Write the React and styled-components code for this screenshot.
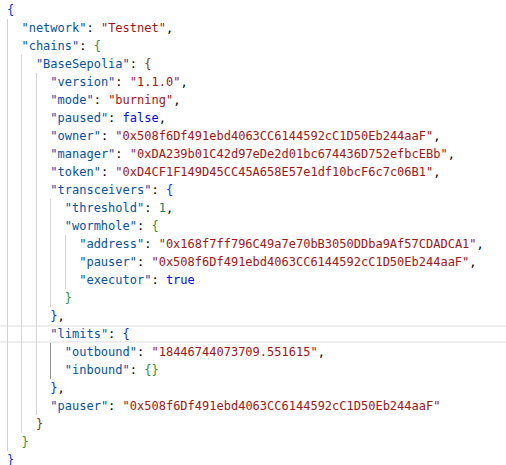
import React from 'react';
import styled, { createGlobalStyle } from 'styled-components';

const GlobalStyle = createGlobalStyle`
  html, body {
    margin: 0;
    padding: 0;
    background: #ffffff;
  }
`;

const colors = {
  key: '#0451a5',
  str: '#a31515',
  num: '#098658',
  bool: '#0000ff',
  punct: '#000000',
  b1: '#0431fa',
  b2: '#319331',
  b3: '#7b3814',
};

// [indent level, tokens, flags]
const k = (t) => ['key', `"${t}"`];
const s = (t) => ['str', `"${t}"`];
const p = (t) => ['punct', t];

const lines = [
  [0, [['b1', '{']]],
  [1, [k('network'), p(': '), s('Testnet'), p(',')]],
  [1, [k('chains'), p(': '), ['b2', '{']]],
  [2, [k('BaseSepolia'), p(': '), ['b3', '{']]],
  [3, [k('version'), p(': '), s('1.1.0'), p(',')]],
  [3, [k('mode'), p(': '), s('burning'), p(',')]],
  [3, [k('paused'), p(': '), ['bool', 'false'], p(',')]],
  [3, [k('owner'), p(': '), s('0x508f6Df491ebd4063CC6144592cC1D50Eb244aaF'), p(',')]],
  [3, [k('manager'), p(': '), s('0xDA239b01C42d97eDe2d01bc674436D752efbcEBb'), p(',')]],
  [3, [k('token'), p(': '), s('0xD4CF1F149D45CC45A658E57e1df10bcF6c7c06B1'), p(',')]],
  [3, [k('transceivers'), p(': '), ['b1', '{']]],
  [4, [k('threshold'), p(': '), ['num', '1'], p(',')]],
  [4, [k('wormhole'), p(': '), ['b2', '{']]],
  [5, [k('address'), p(': '), s('0x168f7ff796C49a7e70bB3050DDba9Af57CDADCA1'), p(',')]],
  [5, [k('pauser'), p(': '), s('0x508f6Df491ebd4063CC6144592cC1D50Eb244aaF'), p(',')]],
  [5, [k('executor'), p(': '), ['bool', 'true']]],
  [4, [['b2', '}']]],
  [3, [['b1', '}'], p(',')]],
  [3, [k('limits'), p(': '), ['b1', '{']], { current: true }],
  [4, [k('outbound'), p(': '), s('18446744073709.551615'), p(',')], { active: 3 }],
  [4, [k('inbound'), p(': '), ['b2', '{}']], { active: 3 }],
  [3, [['b1', '}'], p(',')]],
  [3, [k('pauser'), p(': '), s('0x508f6Df491ebd4063CC6144592cC1D50Eb244aaF')]],
  [2, [['b3', '}']]],
  [1, [['b2', '}']]],
  [0, [['b1', '}']]],
];

const Editor = styled.div`
  padding: 1px 0 0 7px;
  font-family: "DejaVu Sans Mono", "Liberation Mono", monospace;
  font-size: 12px;
  line-height: 18px;
  color: #000;
`;

const Line = styled.div`
  display: flex;
  height: 18px;
  margin-left: -7px;
  padding-left: 7px;
  box-shadow: ${(p) => (p.$current ? 'inset 0 2px 0 #eeeeee, inset 0 -2px 0 #eeeeee' : 'none')};
`;

const Guide = styled.span`
  flex: none;
  width: 2ch;
  height: 18px;
  box-sizing: border-box;
  border-left: 1px solid ${(p) => (p.$active ? '#939393' : '#d3d3d3')};
`;

const Code = styled.span`
  white-space: pre;
`;

const Token = styled.span`
  color: ${(p) => colors[p.$kind]};
`;

export default function App() {
  return (
    <>
      <GlobalStyle />
      <Editor>
        {lines.map(([indent, tokens, flags = {}], i) => (
          <Line key={i} $current={flags.current}>
            {Array.from({ length: indent }).map((_, g) => (
              <Guide key={g} $active={flags.active === g} />
            ))}
            <Code>
              {tokens.map(([kind, text], j) => (
                <Token key={j} $kind={kind}>{text}</Token>
              ))}
            </Code>
          </Line>
        ))}
      </Editor>
    </>
  );
}
